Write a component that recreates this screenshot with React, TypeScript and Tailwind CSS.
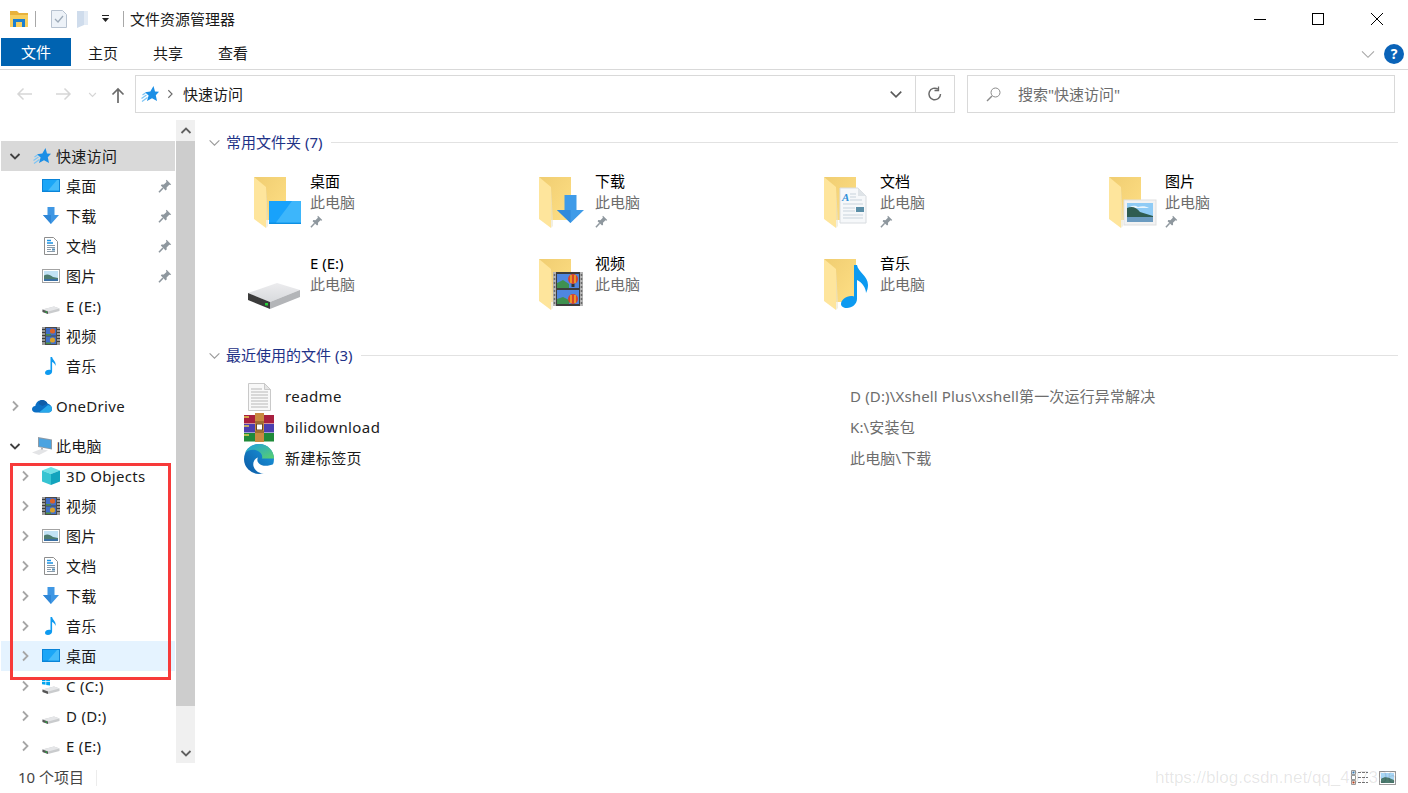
import React from "react";

const FONT = { fontFamily: '"Noto Sans","Noto Sans CJK SC",sans-serif' };

type P = { s?: number; className?: string };

const Chev = ({ dir, c = "#a6a6a6", s = 12, w = 1.6 }: { dir: "r" | "d" | "u"; c?: string; s?: number; w?: number }) => {
  const d = dir === "r" ? "M4 1.5 8.5 6 4 10.5" : dir === "d" ? "M1.5 4 6 8.5 10.5 4" : "M1.5 8 6 3.5 10.5 8";
  return (
    <svg width={s} height={s} viewBox="0 0 12 12" fill="none" className="shrink-0">
      <path d={d} stroke={c} strokeWidth={w} />
    </svg>
  );
};

const Pin = ({ s = 14 }: P) => (
  <svg width={s} height={s} viewBox="0 0 14 14" className="shrink-0">
    <path d="M8.6.8 13.2 5.4 12.3 6.1 11.3 5.7 8.6 8.4 8.7 10.6 7.6 11.4 2.8 6.6 3.6 5.5 5.8 5.6 8.5 2.9 8 1.6Z" fill="#8e979e" />
    <path d="M5 9 1 13.2" stroke="#8e979e" strokeWidth="1.6" />
  </svg>
);

const Star = ({ s = 18 }: P) => (
  <svg width={s} height={s} viewBox="0 0 18 18" className="shrink-0">
    <path d="M12.500 1 14 6.500 18 6.800 14.800 10.300 16 16 11 13.300 6 16 7.600 10.500 4 7.200 9.300 6.500Z" fill="#1c8fe6" />
    <path d="M.5 13.500 5.500 10M1 16.500 6.500 12.500M1.500 10 4.500 8" stroke="#7cc4f4" strokeWidth="1.200" />
  </svg>
);

const Desk = ({ s = 18 }: P) => (
  <svg width={s} height={s} viewBox="0 0 18 18" className="shrink-0">
    <rect x="0" y="2" width="18" height="13" fill="#0a84d8" />
    <rect x="1" y="3" width="16" height="10.5" fill="#1ba6f7" />
    <path d="M6 13.5 15 3h2v10.5Z" fill="#46bcfa" />
  </svg>
);

const Down = ({ s = 18 }: P) => (
  <svg width={s} height={s} viewBox="0 0 18 18" className="shrink-0">
    <path d="M5.500 0h7v8H17L9 17 1 8h4.500Z" fill="#3f97e4" />
    <path d="M9 17 1 8h8Z" fill="#2f86d6" />
  </svg>
);

const Doc = ({ s = 18 }: P) => (
  <svg width={s} height={s} viewBox="0 0 18 18" className="shrink-0">
    <path d="M2.500.5h9l4 4v13h-13Z" fill="#fff" stroke="#8e8e8e" />
    <path d="M5 3.500h4M5 6h6" stroke="#1c93e3" strokeWidth="1.300" />
    <path d="M5 8.500h8M5 10.500h8M5 12.500h4M5 14.500h8" stroke="#8a9aa8" />
    <rect x="10" y="11.500" width="3" height="2" fill="#5b8fb5" />
  </svg>
);

const Pic = ({ s = 18 }: P) => (
  <svg width={s} height={s} viewBox="0 0 18 14" className="shrink-0">
    <rect x=".5" y=".5" width="17" height="13" fill="#fff" stroke="#a3a3a3" />
    <rect x="2" y="2" width="14" height="10" fill="#c2e2f5" />
    <path d="M2 6.500C5 4.500 8 5.500 11 8L16 9v3H2Z" fill="#4d7c70" />
    <path d="M2 10h14v2H2Z" fill="#3a6fa3" />
  </svg>
);

const Drive = ({ s = 18 }: P) => (
  <svg width={s} height={s} viewBox="0 0 18 18" className="shrink-0">
    <path d="M.5 12.500 12 9.500l5.500 2v2.500L6 17 .5 15Z" fill="#c9cbcd" />
    <path d="M.5 12.500 6 14.500 17.500 11.500 12 9.500Z" fill="#e5e6e8" />
    <path d="M.5 12.500 6 14.500V17L.5 15Z" fill="#555" />
    <rect x="3.500" y="14.500" width="1.500" height="1.200" fill="#22c33a" />
  </svg>
);

const Film = ({ s = 18 }: P) => (
  <svg width={s} height={s} viewBox="0 0 18 18" className="shrink-0">
    <rect width="18" height="18" fill="#4a4a4a" />
    <rect x="0" y="0" width="3" height="18" fill="#9a9a9a" />
    <rect x="15" y="0" width="3" height="18" fill="#9a9a9a" />
    <path d="M0 2.500h3M0 5.500h3M0 8.500h3M0 11.500h3M0 14.500h3M15 2.500h3M15 5.500h3M15 8.500h3M15 11.500h3M15 14.500h3" stroke="#3d3d3d" />
    <rect x="4" y="1" width="10" height="7.500" fill="#3f6fc9" />
    <rect x="4" y="9.500" width="10" height="7.500" fill="#3f6fc9" />
    <circle cx="10.500" cy="4" r="2.600" fill="#d8632a" />
    <circle cx="10.500" cy="13" r="2.600" fill="#d8a02a" />
    <path d="M4 7h5v1.500H4ZM4 15.500h5V17H4Z" fill="#4d8f3f" />
  </svg>
);

const Music = ({ s = 18 }: P) => (
  <svg width={s} height={s} viewBox="0 0 18 18" className="shrink-0">
    <path d="M8.500 0h1.600c.4 3 4.400 4.500 3.400 9-.4-2-2-3.500-3.400-4v9.500c0 2-2 3.500-4.200 3.500C4.300 18 3 17 3 15.700 3 14 5 12.800 7 12.800c.6 0 1.100.1 1.500.3Z" fill="#0e9af0" />
  </svg>
);

const Cloud = ({ s = 20 }: P) => (
  <svg width={s} height={s} viewBox="0 0 20 14" className="shrink-0">
    <path d="M4 13.500C1.500 13.500 0 12 0 10.200 0 8.400 1.400 7 3.300 7 4 3 7 1 10 1c2.500 0 4.500 1.300 5.500 3.500C18 5 20 7.300 20 10c0 2-1.500 3.500-3.500 3.500Z" fill="#0b6fc4" />
    <path d="M10 1c2.500 0 4.500 1.300 5.500 3.500L10.500 7 6.500 5C7.300 2.500 8.500 1 10 1Z" fill="#0f5ca8" />
    <path d="M4 13.500h12.500c2 0 3.500-1.500 3.500-3.500 0-1-.3-1.900-.8-2.700L16 6 7 13.500Z" fill="#28a8ea" />
  </svg>
);

const PC = ({ s = 20 }: P) => (
  <svg width={s} height={s} viewBox="0 0 20 18" className="shrink-0">
    <path d="M6 0 20 2.500v10L6 10Z" fill="#8f9aa5" />
    <path d="M7 1.200 19 3.300v8.200L7 9.300Z" fill="#4aa3e0" />
    <path d="M0 15.500 9 12l7 1.500L7 18Z" fill="#e3e4e6" />
    <path d="M9 10.500h2v2H9Z" fill="#b0b4b8" />
  </svg>
);

const Cube = ({ s = 18 }: P) => (
  <svg width={s} height={s} viewBox="0 0 18 18" className="shrink-0">
    <path d="M9 0 18 3.500 9 7 0 3.500Z" fill="#6fe0e6" />
    <path d="M0 3.500 9 7v11L0 14.500Z" fill="#36c4d2" />
    <path d="M18 3.500 9 7v11l9-3.500Z" fill="#12a4bd" />
  </svg>
);

const WinDrive = ({ s = 18 }: P) => (
  <svg width={s} height={s} viewBox="0 0 18 18" className="shrink-0">
    <path d="M.5 12.500 12 9.500l5.500 2v2.500L6 17 .5 15Z" fill="#c9cbcd" />
    <path d="M.5 12.500 6 14.500 17.500 11.500 12 9.500Z" fill="#e5e6e8" />
    <path d="M.5 12.500 6 14.500V17L.5 15Z" fill="#555" />
    <path d="M0 1.500 3.500 1v3H0ZM4.200.9 8 .3V4H4.200ZM0 4.800h3.500v3L0 7.300ZM4.200 4.800H8v3.700l-3.800-.6Z" fill="#00a4ef" />
  </svg>
);

const BigFolder = ({ children }: { children?: React.ReactNode }) => (
  <svg width={70} height={60} viewBox="0 0 70 60" className="shrink-0">
    <defs>
      <linearGradient id="fb" x1="0" y1="0" x2="1" y2="1">
        <stop offset="0" stopColor="#f0cd71" />
        <stop offset="1" stopColor="#fedf85" />
      </linearGradient>
    </defs>
    <path d="M14 6h32v43H26Z" fill="url(#fb)" />
    <path d="M14 6 26 16v41l-12-9Z" fill="#fee59c" />
    <path d="M26 16v41l2-2V49Z" fill="#e9e4cf" opacity=".6" />
    {children}
  </svg>
);

const BigDesk = () => (
  <g>
    <rect x="29" y="30" width="32" height="23" fill="#0d8fe2" />
    <rect x="29" y="30" width="32" height="21.500" fill="#18a2fb" />
    <path d="M36 51.500 52 30h9v21.500Z" fill="#3db6fb" />
  </g>
);
const BigDown = () => (
  <g>
    <path d="M39.500 24h12v15H59L45.500 52 32 39h7.500Z" fill="#3f9be8" />
    <path d="M45.500 52 32 39h13.500Z" fill="#2f8adc" />
  </g>
);
const BigDoc = () => (
  <g transform="translate(1 -7)">
    <path d="M29 24h18l8 8v27H29Z" fill="#f6f8fa" stroke="#d8dce0" />
    <path d="M47 24v8h8Z" fill="#dfe4e8" />
    <text x="31" y="37" fontSize="11" fontStyle="italic" fontFamily="Liberation Serif" fontWeight="700" fill="#2f8fd8">A</text>
    <path d="M39 30h6M39 33h6M39 36h12M32 40h20M32 44h12M32 47h12M32 51h20M32 54h20" stroke="#c8d3dc" />
    <rect x="45" y="43" width="8" height="5" fill="#5b8fa8" />
  </g>
);
const BigPic = () => (
  <g transform="translate(-1 -1)">
    <rect x="30" y="30" width="32" height="25" fill="#f2f2f2" stroke="#dfdfdf" />
    <rect x="33" y="33" width="26" height="19" fill="#8fcbf5" />
    <path d="M36 37c3-2 6-1 8 0 3-1 8-1 11 1H36Z" fill="#e8f5fd" />
    <path d="M33 38c5-2 9-1 13 4l13 4v2H33Z" fill="#2f5c50" />
    <rect x="33" y="47" width="26" height="5" fill="#6b9bc0" />
  </g>
);
const BigFilm = () => (
  <g transform="translate(-6 -5)">
    <rect x="34" y="24" width="30" height="34" fill="#b4b4b4" />
    <rect x="37" y="24" width="24" height="34" fill="#3d3d3d" />
    <path d="M35.500 26v31M62.500 26v31" stroke="#6a6a6a" strokeWidth="1.500" strokeDasharray="2 2" />
    <rect x="38" y="26" width="22" height="14" fill="#4f86e0" />
    <rect x="38" y="42" width="22" height="14" fill="#4f86e0" />
    <path d="M38 35l6-3 6 4v4H38ZM38 51l6-2 6 3v4H38Z" fill="#3f9050" />
    <circle cx="54" cy="31" r="5" fill="#d8442a" />
    <path d="M52 27v8M56 27v8" stroke="#f0c030" strokeWidth="1.300" />
    <path d="M52.500 36h3v3h-3Z" fill="#333" />
    <circle cx="54" cy="51" r="5" fill="#d8442a" />
    <path d="M52 47v8M56 47v8" stroke="#f0c030" strokeWidth="1.300" />
  </g>
);
const BigMusic = () => (
  <path d="M44 12h3c1 7 11 11 11 20 0 3-1 6-2 8 0-5-4-11-9-13v19c0 5-5 9-10 9-4 0-6-2-6-4 0-4 5-8 10-8 1 0 2 0 3 .5Z" fill="#0d9af0" />
);

const BigDrive = () => (
  <svg width={70} height={60} viewBox="0 0 70 60" className="shrink-0">
    <defs>
      <linearGradient id="dt" x1="0" y1="0" x2="0" y2="1">
        <stop offset="0" stopColor="#ececee" />
        <stop offset="1" stopColor="#d8dadd" />
      </linearGradient>
    </defs>
    <path d="M8 40 37 30l23 7-30 12Z" fill="url(#dt)" />
    <path d="M8 40 30 49v7L8 47Z" fill="#3b3b3b" />
    <path d="M30 49 60 37v7L30 56Z" fill="#b3b5b8" />
    <rect x="25" y="50" width="3" height="2.500" fill="#27d03a" />
  </svg>
);

const TextFile = () => (
  <svg width={32} height={30} viewBox="0 0 32 30">
    <path d="M5.500 1.500h16l6 6v21h-22Z" fill="#f8f8f8" stroke="#c9c9c9" />
    <path d="M21.500 1.500v6h6Z" fill="#e5e5e5" stroke="#c9c9c9" />
    <path d="M8 7h11M8 10h17M8 13h17M8 16h17M8 19h17M8 22h17M8 25h17" stroke="#b8b8b8" />
  </svg>
);
const Rar = () => (
  <svg width={32} height={30} viewBox="0 0 32 30">
    <rect x="1" y="2" width="30" height="8.500" fill="#a8203f" />
    <rect x="1" y="11" width="30" height="8.500" fill="#4b3fb0" />
    <rect x="1" y="20" width="30" height="8.500" fill="#1f8a3a" />
    <path d="M1 4h5M1 13h5M1 22h5" stroke="#e8d050" strokeWidth="1.500" />
    <rect x="12" y="0" width="9" height="29" fill="#c98a40" />
    <rect x="13.500" y="11" width="6" height="6" fill="#fff" stroke="#6b4a20" />
    <path d="M12 9h9M12 19h9" stroke="#7b5220" />
  </svg>
);
const Edge = () => (
  <svg width={32} height={32} viewBox="0 0 32 32">
    <defs>
      <linearGradient id="eg1" x1="0" y1="1" x2="1" y2="0">
        <stop offset="0" stopColor="#0c59a4" />
        <stop offset="1" stopColor="#1b9de2" />
      </linearGradient>
      <linearGradient id="eg2" x1="0" y1="0" x2="1" y2="1">
        <stop offset="0" stopColor="#1b9de2" />
        <stop offset="1" stopColor="#5ad16c" />
      </linearGradient>
    </defs>
    <circle cx="16" cy="16" r="15" fill="url(#eg1)" />
    <path d="M16 1C9 1 4 5 2 10c3-3 8-4 12-2.500 4 1.500 6 5 5 8h12C31 8 25 1 16 1Z" fill="url(#eg2)" />
    <path d="M19 15.500c-1 1.500-2.500 2-4 2-1.500 0-2.500-.4-3-1-.5 4 3 8 8 9.500 3 .8 6 .5 9-.5l2-4.500c-3 2-7 2.500-10 1-2-1-2.500-3-2-6.500Z" fill="#fff" opacity="0" />
    <path d="M31 21c-1 4-4 7-8 9.200-5 1.500-11-1.700-12.500-7C9.500 19 12 15.500 15 14.500c-1 1.500-1 4 1 6 3 3 9 3 15 .5Z" fill="#fff" />
  </svg>
);

const Row = ({ lv = 1, chev, icon, label, pin, sel, hot, className = "" }: { lv?: 0 | 1; chev?: "r" | "d"; icon: React.ReactNode; label: string; pin?: boolean; sel?: boolean; hot?: boolean; className?: string }) => (
  <div className={`flex h-[30px] items-center text-[15px] text-[#1a1a1a] ${sel ? "bg-[#d9d9d9]" : hot ? "bg-[#e5f3ff]" : ""} ${className}`}>
    <span className={`flex shrink-0 justify-center ${lv === 0 ? "w-[26px] pl-[1px]" : "w-[41px] pl-[7px]"}`}>
      {chev && <Chev dir={chev} c={chev === "d" ? "#404040" : "#a6a6a6"} s={12} w={1.8} />}
    </span>
    <span className={`flex shrink-0 justify-center ${lv === 0 ? "ml-[6px] w-[18px]" : "w-[18px]"}`}>{icon}</span>
    <span className={`whitespace-nowrap tracking-[0.3px] ${lv === 0 ? "ml-[5px]" : "ml-[6px]"}`}>{label}</span>
    {pin && <span className="ml-auto mr-[3px]"><Pin /></span>}
  </div>
);

const Tile = ({ icon, name, pin }: { icon: React.ReactNode; name: string; pin?: boolean }) => (
  <div className="flex h-[82px] items-start">
    {icon}
    <div className="flex flex-col text-[15px] leading-[20px]">
      <span className="text-black">{name}</span>
      <span className="mt-[1px] text-[#6d6d6d]">此电脑</span>
      {pin && <span className="mt-[3px]"><Pin s={13} /></span>}
    </div>
  </div>
);

const Header = ({ text, className = "" }: { text: string; className?: string }) => (
  <div className={`flex h-[22px] items-center ${className}`}>
    <span className="-ml-[1px]"><Chev dir="d" c="#9a9a9a" s={13} w={1} /></span>
    <span className="ml-[5px] whitespace-nowrap text-[15px] text-[#1e3287]">{text}</span>
    <div className="ml-[9px] h-[1px] flex-1 bg-[#e2e2e2]" />
  </div>
);

const Recent = ({ icon, name, path }: { icon: React.ReactNode; name: string; path: string }) => (
  <div className="flex h-[31px] items-center">
    <span className="flex w-[32px] shrink-0 justify-center">{icon}</span>
    <span className="ml-[10px] w-[565px] shrink-0 text-[15px] tracking-[0.4px] text-[#1a1a1a]">{name}</span>
    <span className="whitespace-nowrap text-[15px] tracking-[0.15px] text-[#6d6d6d]">{path}</span>
  </div>
);

export default function App() {
  return (
    <div className="relative flex h-[793px] w-[1408px] flex-col overflow-hidden bg-white" style={FONT}>
      {/* title bar */}
      <div className="flex h-[38px] shrink-0 items-center pl-[10px]">
        <svg width="18" height="18" viewBox="0 0 18 18" className="shrink-0">
          <path d="M0 1h7l2 2h9v3H0Z" fill="#e8b23c" />
          <rect y="5" width="18" height="12" fill="#f7cf5f" />
          <path d="M3 17V9h12v8h-3v-5H6v5Z" fill="#1b7fd0" />
        </svg>
        <div className="ml-[7px] h-[16px] w-[1px] bg-[#a8a8a8]" />
        <svg width="16" height="18" viewBox="0 0 16 18" className="ml-[15px] shrink-0">
          <path d="M.5.5h11l4 4v13H.5Z" fill="#edf2f8" stroke="#b7c2d0" />
          <path d="M4 9l3 3 5-6" stroke="#9daab8" strokeWidth="1.300" fill="none" />
        </svg>
        <svg width="14" height="18" viewBox="0 0 14 18" className="ml-[10px] shrink-0">
          <path d="M0 1h7v14l-7 3Z" fill="#cfdcec" />
          <path d="M7 1h4v14H7Z" fill="#e3ebf5" />
        </svg>
        <svg width="8" height="8" viewBox="0 0 8 8" className="ml-[11px] shrink-0">
          <path d="M0 0h7v1H0ZM0 3h7L3.500 7Z" fill="#222" />
        </svg>
        <div className="ml-[13px] h-[16px] w-[1px] bg-[#a8a8a8]" />
        <span className="ml-[6px] text-[15px] text-[#1a1a1a]">文件资源管理器</span>
        <div className="ml-auto flex items-center pr-[25px]">
          <svg width="12" height="12" viewBox="0 0 12 12"><path d="M0 6.500h12" stroke="#000" /></svg>
          <svg width="12" height="12" viewBox="0 0 12 12" className="ml-[46px]"><rect x=".5" y=".5" width="11" height="11" fill="none" stroke="#000" /></svg>
          <svg width="12" height="12" viewBox="0 0 12 12" className="ml-[47px]"><path d="M0 0 12 12M12 0 0 12" stroke="#000" /></svg>
        </div>
      </div>

      {/* ribbon tabs */}
      <div className="flex h-[32px] shrink-0 items-start border-b border-[#d9d9d9] pl-[1px] text-[15px] text-[#1a1a1a]">
        <div className="flex h-[28px] w-[70px] items-center justify-center bg-[#0063b1] text-white">文件</div>
        <div className="ml-[17px] flex h-[31px] items-center">主页</div>
        <div className="ml-[35px] flex h-[31px] items-center">共享</div>
        <div className="ml-[35px] flex h-[31px] items-center">查看</div>
        <div className="ml-auto flex h-[31px] items-center pr-[4px]">
          <Chev dir="d" c="#a6a6a6" s={16} w={.8} />
          <span className="ml-[8px] flex h-[20px] w-[20px] items-center justify-center rounded-full bg-[#0a63b8] text-[14px] font-bold leading-none text-white">?</span>
        </div>
      </div>

      {/* address row */}
      <div className="mb-[7px] mt-[5px] flex h-[38px] shrink-0 items-center">
        <div className="flex w-[135px] items-center pl-[16px]">
          <svg width="17" height="14" viewBox="0 0 17 14"><path d="M16 7H2M7.500 1.500 2 7l5.500 5.500" fill="none" stroke="#d6d6d6" strokeWidth="1.500" /></svg>
          <svg width="17" height="14" viewBox="0 0 17 14" className="ml-[22px]"><path d="M1 7h14M9.500 1.500 15 7l-5.500 5.500" fill="none" stroke="#d6d6d6" strokeWidth="1.500" /></svg>
          <span className="ml-[16px]"><Chev dir="d" c="#d6d6d6" s={9} w={1.500} /></span>
          <svg width="14" height="17" viewBox="0 0 14 17" className="ml-[14px] mt-[3px]"><path d="M7 16V2M1.500 7.500 7 2l5.500 5.500" fill="none" stroke="#6a6a6a" strokeWidth="1.700" /></svg>
        </div>
        <div className="flex h-[38px] w-[820px] items-center border border-[#d9d9d9] pl-[5px]">
          <Star />
          <span className="ml-[6px]"><Chev dir="r" c="#6a6a6a" s={10} w={1.300} /></span>
          <span className="ml-[8px] text-[15px] text-[#1a1a1a]">快速访问</span>
          <span className="ml-auto"><Chev dir="d" c="#5a5a5a" s={14} w={1.400} /></span>
          <div className="ml-[12px] h-full w-[1px] bg-[#d9d9d9]" />
          <svg width="16" height="16" viewBox="0 0 16 16" className="ml-[11px] mr-[11px]">
            <path d="M13.500 8A5.800 5.800 0 1 1 11 3.200" fill="none" stroke="#6a6a6a" strokeWidth="1.500" />
            <path d="M11.500 .5v4h-4" fill="none" stroke="#6a6a6a" strokeWidth="1.300" />
          </svg>
        </div>
        <div className="ml-[12px] flex h-[38px] w-[428px] items-center border border-[#d9d9d9] pl-[17px]">
          <svg width="17" height="17" viewBox="0 0 17 17">
            <circle cx="10.500" cy="6.500" r="4.500" fill="none" stroke="#8a8a8a" />
            <path d="M7 10 2 15" stroke="#8a8a8a" strokeWidth="1.500" />
          </svg>
          <span className="ml-[16px] text-[15px] text-[#6d6d6d]">搜索"快速访问"</span>
        </div>
      </div>

      {/* main */}
      <div className="flex min-h-0 flex-1">
        <div className="relative w-[175px] shrink-0 pl-[1px] pt-[21px]">
          <Row lv={0} chev="d" sel icon={<Star />} label="快速访问" />
          <Row icon={<Desk />} label="桌面" pin />
          <Row icon={<Down />} label="下载" pin />
          <Row icon={<Doc />} label="文档" pin />
          <Row icon={<Pic />} label="图片" pin />
          <Row icon={<Drive />} label="E (E:)" />
          <Row icon={<Film />} label="视频" />
          <Row icon={<Music />} label="音乐" />
          <Row lv={0} chev="r" className="mt-[10px]" icon={<Cloud />} label="OneDrive" />
          <Row lv={0} chev="d" className="mt-[10px]" icon={<PC />} label="此电脑" />
          <Row chev="r" icon={<Cube />} label="3D Objects" />
          <Row chev="r" icon={<Film />} label="视频" />
          <Row chev="r" icon={<Pic />} label="图片" />
          <Row chev="r" icon={<Doc />} label="文档" />
          <Row chev="r" icon={<Down />} label="下载" />
          <Row chev="r" icon={<Music />} label="音乐" />
          <Row chev="r" hot icon={<Desk />} label="桌面" />
          <Row chev="r" icon={<WinDrive />} label="C (C:)" />
          <Row chev="r" icon={<Drive />} label="D (D:)" />
          <Row chev="r" icon={<Drive />} label="E (E:)" />
          <div className="absolute left-[10px] top-[343px] h-[217px] w-[161px] border-[3px] border-[#f73a3a]" />
        </div>

        {/* scrollbar */}
        <div className="ml-[1px] flex h-[643px] w-[19px] shrink-0 flex-col bg-[#f0f0f0]">
          <div className="flex h-[21px] items-center justify-center"><Chev dir="u" c="#606060" s={12} w={1.800} /></div>
          <div className="h-[565px] bg-[#cdcdcd]" />
          <div className="mt-auto flex h-[20px] items-center justify-center"><Chev dir="d" c="#606060" s={12} w={1.800} /></div>
        </div>

        {/* content */}
        <div className="min-w-0 flex-1 pl-[14px] pr-[10px] pt-[11px]">
          <Header text="常用文件夹 (7)" />
          <div className="ml-[31px] mt-[18px] grid grid-cols-[285px_285px_285px_285px]">
            <Tile name="桌面" pin icon={<BigFolder><BigDesk /></BigFolder>} />
            <Tile name="下载" pin icon={<BigFolder><BigDown /></BigFolder>} />
            <Tile name="文档" pin icon={<BigFolder><BigDoc /></BigFolder>} />
            <Tile name="图片" pin icon={<BigFolder><BigPic /></BigFolder>} />
            <Tile name="E (E:)" icon={<BigDrive />} />
            <Tile name="视频" icon={<BigFolder><BigFilm /></BigFolder>} />
            <Tile name="音乐" icon={<BigFolder><BigMusic /></BigFolder>} />
          </div>
          <Header text="最近使用的文件 (3)" className="mt-[9px]" />
          <div className="ml-[34px] mt-[15px] flex flex-col">
            <Recent icon={<TextFile />} name="readme" path="D (D:)\Xshell Plus\xshell第一次运行异常解决" />
            <Recent icon={<Rar />} name="bilidownload" path="K:\安装包" />
            <Recent icon={<Edge />} name="新建标签页" path="此电脑\下载" />
          </div>
        </div>
      </div>

      {/* status */}
      <div className="flex h-[29px] shrink-0 items-center pb-[2px] pl-[18px] text-[15px] text-[#444]">
        <span>10 个项目</span>
        <div className="ml-[12px] h-[16px] w-[1px] bg-[#ececec]" />
        <div className="ml-auto flex items-center pr-[12px]">
          <svg width="18" height="15" viewBox="0 0 18 15">
            <path d="M.5.500h4v4h-4ZM.5 5.500h4v4h-4ZM.5 10.500h4v4h-4Z" fill="#fff" stroke="#9a9a9a" />
            <rect x="1.500" y="11.500" width="2" height="2" fill="#c4471f" />
            <rect x="1.500" y="1.500" width="2" height="2" fill="#3f7fb5" />
            <path d="M7 2.500h10M7 7.500h10M7 12.500h10" stroke="#777" strokeDasharray="3 1" />
          </svg>
          <svg width="17" height="14" viewBox="0 0 17 14" className="ml-[10px]">
            <rect x=".5" y=".5" width="16" height="13" fill="#fff" stroke="#9a9a9a" />
            <rect x="2" y="2" width="13" height="10" fill="#a9d6f5" />
            <path d="M2 8c4-3 7-2 13 1v3H2Z" fill="#4d7c70" />
          </svg>
        </div>
      </div>

      <span className="pointer-events-none absolute left-[1155px] top-[765px] whitespace-nowrap text-[17px] text-black/10" style={{ fontFamily: '"Liberation Sans",sans-serif' }}>
        https://blog.csdn.net/qq_407396
      </span>
    </div>
  );
}
